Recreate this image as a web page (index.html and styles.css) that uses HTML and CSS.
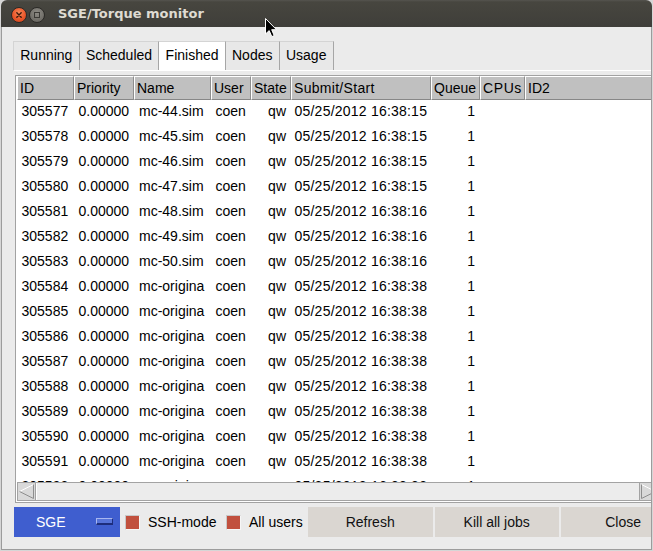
FILE: index.html
```html
<!DOCTYPE html>
<html>
<head>
<meta charset="utf-8">
<title>SGE/Torque monitor</title>
<link rel="stylesheet" href="styles.css">
</head>
<body>
<div class="window">
  <div class="titlebar">
    <span class="wbtn close">
      <svg width="16" height="16" viewBox="0 0 16 16"><path d="M5.5 5.5 L10.5 10.5 M10.5 5.5 L5.5 10.5" stroke="#3a1a0c" stroke-width="1.6" stroke-linecap="round"/></svg>
    </span>
    <span class="wbtn min"><span class="sq"></span></span>
    <span class="title">SGE/Torque monitor</span>
  </div>
  <div class="body">
    <div class="tabs">
      <div class="tab first">Running</div>
      <div class="tab">Scheduled</div>
      <div class="tab active">Finished</div>
      <div class="tab">Nodes</div>
      <div class="tab">Usage</div>
    </div>
    <div class="pane">
      <div class="frame">
        <div class="grid head">
          <div class="hc">ID</div>
          <div class="hc">Priority</div>
          <div class="hc">Name</div>
          <div class="hc">User</div>
          <div class="hc">State</div>
          <div class="hc wide">Submit/Start</div>
          <div class="hc">Queue</div>
          <div class="hc cpus">CPUs</div>
          <div class="hc">ID2</div>
        </div>
        <div class="rows">
          <div class="grid row"><div class="c">305577</div><div class="c">0.00000</div><div class="c name">mc-44.sim</div><div class="c">coen</div><div class="c r">qw</div><div class="c date">05/25/2012 16:38:15</div><div class="c r">1</div><div class="c"></div><div class="c"></div></div>
          <div class="grid row"><div class="c">305578</div><div class="c">0.00000</div><div class="c name">mc-45.sim</div><div class="c">coen</div><div class="c r">qw</div><div class="c date">05/25/2012 16:38:15</div><div class="c r">1</div><div class="c"></div><div class="c"></div></div>
          <div class="grid row"><div class="c">305579</div><div class="c">0.00000</div><div class="c name">mc-46.sim</div><div class="c">coen</div><div class="c r">qw</div><div class="c date">05/25/2012 16:38:15</div><div class="c r">1</div><div class="c"></div><div class="c"></div></div>
          <div class="grid row"><div class="c">305580</div><div class="c">0.00000</div><div class="c name">mc-47.sim</div><div class="c">coen</div><div class="c r">qw</div><div class="c date">05/25/2012 16:38:15</div><div class="c r">1</div><div class="c"></div><div class="c"></div></div>
          <div class="grid row"><div class="c">305581</div><div class="c">0.00000</div><div class="c name">mc-48.sim</div><div class="c">coen</div><div class="c r">qw</div><div class="c date">05/25/2012 16:38:16</div><div class="c r">1</div><div class="c"></div><div class="c"></div></div>
          <div class="grid row"><div class="c">305582</div><div class="c">0.00000</div><div class="c name">mc-49.sim</div><div class="c">coen</div><div class="c r">qw</div><div class="c date">05/25/2012 16:38:16</div><div class="c r">1</div><div class="c"></div><div class="c"></div></div>
          <div class="grid row"><div class="c">305583</div><div class="c">0.00000</div><div class="c name">mc-50.sim</div><div class="c">coen</div><div class="c r">qw</div><div class="c date">05/25/2012 16:38:16</div><div class="c r">1</div><div class="c"></div><div class="c"></div></div>
          <div class="grid row"><div class="c">305584</div><div class="c">0.00000</div><div class="c name">mc-origina</div><div class="c">coen</div><div class="c r">qw</div><div class="c date">05/25/2012 16:38:38</div><div class="c r">1</div><div class="c"></div><div class="c"></div></div>
          <div class="grid row"><div class="c">305585</div><div class="c">0.00000</div><div class="c name">mc-origina</div><div class="c">coen</div><div class="c r">qw</div><div class="c date">05/25/2012 16:38:38</div><div class="c r">1</div><div class="c"></div><div class="c"></div></div>
          <div class="grid row"><div class="c">305586</div><div class="c">0.00000</div><div class="c name">mc-origina</div><div class="c">coen</div><div class="c r">qw</div><div class="c date">05/25/2012 16:38:38</div><div class="c r">1</div><div class="c"></div><div class="c"></div></div>
          <div class="grid row"><div class="c">305587</div><div class="c">0.00000</div><div class="c name">mc-origina</div><div class="c">coen</div><div class="c r">qw</div><div class="c date">05/25/2012 16:38:38</div><div class="c r">1</div><div class="c"></div><div class="c"></div></div>
          <div class="grid row"><div class="c">305588</div><div class="c">0.00000</div><div class="c name">mc-origina</div><div class="c">coen</div><div class="c r">qw</div><div class="c date">05/25/2012 16:38:38</div><div class="c r">1</div><div class="c"></div><div class="c"></div></div>
          <div class="grid row"><div class="c">305589</div><div class="c">0.00000</div><div class="c name">mc-origina</div><div class="c">coen</div><div class="c r">qw</div><div class="c date">05/25/2012 16:38:38</div><div class="c r">1</div><div class="c"></div><div class="c"></div></div>
          <div class="grid row"><div class="c">305590</div><div class="c">0.00000</div><div class="c name">mc-origina</div><div class="c">coen</div><div class="c r">qw</div><div class="c date">05/25/2012 16:38:38</div><div class="c r">1</div><div class="c"></div><div class="c"></div></div>
          <div class="grid row"><div class="c">305591</div><div class="c">0.00000</div><div class="c name">mc-origina</div><div class="c">coen</div><div class="c r">qw</div><div class="c date">05/25/2012 16:38:38</div><div class="c r">1</div><div class="c"></div><div class="c"></div></div>
          <div class="grid row"><div class="c">305592</div><div class="c">0.00000</div><div class="c name">mc-origina</div><div class="c">coen</div><div class="c r">qw</div><div class="c date">05/25/2012 16:38:38</div><div class="c r">1</div><div class="c"></div><div class="c"></div></div>
        </div>
        <div class="hscroll">
          <div class="arrow">
            <svg width="19" height="17" viewBox="0 0 19 17"><path d="M16.5 1.5 L2.5 8.5" stroke="#ffffff" stroke-width="1" fill="none"/><path d="M2.5 8.5 L16.5 15.5 L16.5 1.5" stroke="#8e8e8e" stroke-width="1" fill="none"/></svg>
          </div>
          <div class="slider"></div>
          <div class="arrow right">
            <svg width="19" height="17" viewBox="0 0 19 17"><path d="M2.5 1.5 L16.5 8.5" stroke="#ffffff" stroke-width="1" fill="none"/><path d="M16.5 8.5 L2.5 15.5 L2.5 1.5" stroke="#8e8e8e" stroke-width="1" fill="none"/></svg>
          </div>
        </div>
      </div>
    </div>
    <div class="bottombar">
      <div class="sge">SGE<span class="ind"></span></div>
      <span class="check first"></span>
      <span class="label">SSH-mode</span>
      <span class="check"></span>
      <span class="label">All users</span>
      <div class="btn refresh">Refresh</div>
      <div class="btn kill">Kill all jobs</div>
      <div class="btn">Close</div>
    </div>
  </div>
  <svg class="cursor" width="13" height="20" viewBox="0 0 13 20"><path d="M0.5 0.5 L0.5 16 L4.2 12.6 L6.8 18.6 L9.2 17.6 L6.7 11.7 L11.5 11.7 Z" fill="#000" stroke="#fff" stroke-width="1" stroke-linejoin="round"/></svg>
</div>
</body>
</html>
```
FILE: styles.css
```css
html, body {
  margin: 0;
  padding: 0;
  background: #d6d6d6;
}
body {
  width: 653px;
  height: 551px;
  overflow: hidden;
  font-family: "Liberation Sans", Arial, sans-serif;
  font-size: 14px;
  color: #000;
}
.window {
  position: relative;
  width: 651px;
  height: 551px;
  margin-left: 1px;
  display: flex;
  flex-direction: column;
}
.titlebar {
  height: 27px;
  flex: none;
  display: flex;
  align-items: center;
  background: linear-gradient(#55544f 0px, #47463f 2px, #3f3e3a 27px);
  border-radius: 6px 6px 0 0;
  padding-left: 10px;
  box-sizing: border-box;
}
.wbtn {
  width: 16px;
  height: 16px;
  border-radius: 50%;
  box-sizing: border-box;
  display: flex;
  align-items: center;
  justify-content: center;
  flex: none;
  margin-top: 2px;
}
.wbtn.close {
  background: radial-gradient(circle at 50% 35%, #f6895a 0%, #e9562a 55%, #c9421a 100%);
  border: 1px solid #2b2a27;
}
.wbtn.close svg { display: block; }
.wbtn.min {
  margin-left: 2px;
  background: radial-gradient(circle at 50% 35%, #8c8a84 0%, #75736d 55%, #5f5d58 100%);
  border: 1px solid #2b2a27;
}
.wbtn.min .sq {
  width: 6px;
  height: 6px;
  border: 1px solid #3a3935;
  box-sizing: border-box;
}
.title {
  margin-left: 13px;
  font-family: "DejaVu Sans", sans-serif;
  font-weight: bold;
  font-size: 13px;
  color: #dfdbd2;
  line-height: 26px;
  padding-top: 1px;
}
.body {
  flex: 1;
  background: #ebebeb;
  border: 1px solid #9c9c9c;
  border-top: none;
  margin-bottom: 1px;
  overflow: hidden;
  display: flex;
  flex-direction: column;
}
.tabs {
  display: flex;
  margin: 14px 0 0 11px;
  height: 29px;
  flex: none;
}
.tab {
  box-sizing: border-box;
  height: 29px;
  line-height: 27px;
  padding: 0 6.25px 1px;
  border-top: 1px solid #d4d4d4;
  border-right: 1px solid #a6a6a6;
  background: #e8e8e8;
  white-space: nowrap;
}
.tab.first { border-left: 1px solid #d4d4d4; }
.tab.active { background: #ffffff; }
.pane {
  margin-left: 12px;
  border-top: 1px solid #ffffff;
  padding: 4px 0 0 1px;
  flex: none;
}
.frame {
  width: 644px;
  box-sizing: border-box;
  border: 1px solid #a2a2a2;
  background: #ffffff;
  padding: 0 0 1px 1px;
}
.grid {
  display: grid;
  grid-template-columns: 57px 60px 77px 40px 40px 140px 49px 45px 1fr;
}
.head .hc {
  box-sizing: border-box;
  height: 24px;
  line-height: 22px;
  background: #c0c0c0;
  border-top: 1px solid #ffffff;
  border-left: 1px solid #ffffff;
  border-right: 1px solid #8e8e8e;
  border-bottom: 1px solid #878787;
  padding-left: 2px;
  white-space: nowrap;
  overflow: hidden;
}
.head .hc.wide { letter-spacing: 0.3px; }
.head .hc.cpus { letter-spacing: 0.6px; }
.rows {
  height: 382px;
  overflow: hidden;
}
.row { height: 25px; }
.row .c {
  line-height: 21px;
  padding: 1px 5px 0 4.5px;
  white-space: nowrap;
}
.row .c.r { text-align: right; }
.row .c.date { padding-left: 3.5px; letter-spacing: 0.22px; }
.row .c.name { padding-left: 5px; }
.hscroll {
  display: flex;
  height: 19px;
  box-sizing: border-box;
  border-top: 1px solid #a3a3a3;
  border-bottom: 1px solid #a3a3a3;
  background: #ebebeb;
}
.arrow {
  width: 19px;
  flex: none;
  background: #d9d9d9;
  border-right: 1px solid #a3a3a3;
  box-sizing: border-box;
  border-left: 1px solid #a3a3a3;
}
.arrow svg { display: block; margin-left: -1px; }
.arrow.right { border-left: 1px solid #a3a3a3; border-right: none; width: 19px; }
.slider {
  flex: 1;
  background: #ececec;
  border-left: 1px solid #ffffff;
}
.bottombar {
  display: flex;
  align-items: center;
  height: 30px;
  margin: 4px 0 0 12px;
  flex: none;
  white-space: nowrap;
}
.sge {
  width: 106px;
  height: 30px;
  flex: none;
  box-sizing: border-box;
  background: #3f5ecf;
  color: #ffffff;
  line-height: 30px;
  padding-left: 22px;
  position: relative;
  display: flex;
  align-items: center;
}
.sge .ind {
  margin-left: 30px;
  width: 17px;
  height: 7px;
  box-sizing: border-box;
  background: #5673d9;
  border-top: 1px solid #a8b7f0;
  border-left: 1px solid #a8b7f0;
  border-right: 1px solid #1d2d7c;
  border-bottom: 2px solid #1d2d7c;
  margin-top: -1px;
}
.check {
  width: 15px;
  height: 15px;
  flex: none;
  box-sizing: border-box;
  background: #c1503e;
  border: 1px solid #c8c8c8;
  border-bottom-color: #f6f6f6;
  border-right-color: #f6f6f6;
  margin-left: 9.5px;
}
.check.first { margin-left: 5px; }
.label {
  margin-left: 8px;
  flex: none;
}
.btn {
  width: 125px;
  height: 30px;
  flex: none;
  box-sizing: border-box;
  background: #dad6d1;
  text-align: center;
  line-height: 30px;
  margin-left: 2px;
  color: #111;
}
.btn.refresh { margin-left: 5px; }
.btn.kill { width: 124px; }
.cursor {
  position: absolute;
  left: 264px;
  top: 18px;
}
```
